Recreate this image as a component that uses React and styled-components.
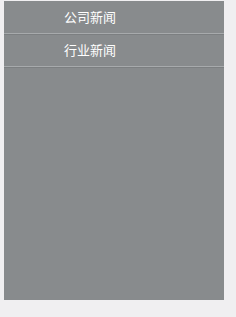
import React from "react";
import styled, { createGlobalStyle } from "styled-components";

const Global = createGlobalStyle`
html, body {
  margin: 0;
  padding: 0;
  background: #f0eff1;
  font-family: "Noto Sans CJK SC", "Noto Sans", sans-serif;
}
`

const Page = styled.div`
padding: 1px 12px 17px 4px;
`

const Panel = styled.ul`
list-style: none;
margin: 0;
padding: 0;
width: 220px;
height: 299px;
background: #888b8d;
`

const Item = styled.li`
height: 32px;
line-height: 32px;
padding-left: 60px;
color: #ffffff;
font-size: 13px;
border-bottom: 1px solid #a7aaac;
box-shadow: 0 1px 0 #7c7f81;
`

const items = ["公司新闻", "行业新闻"];

export default function App() {
  return (
    <>
      <Global />
      <Page>
        <Panel>
          {items.map((t) => (
            <Item key={t}>{t}</Item>
          ))}
        </Panel>
      </Page>
    </>
  );
}
